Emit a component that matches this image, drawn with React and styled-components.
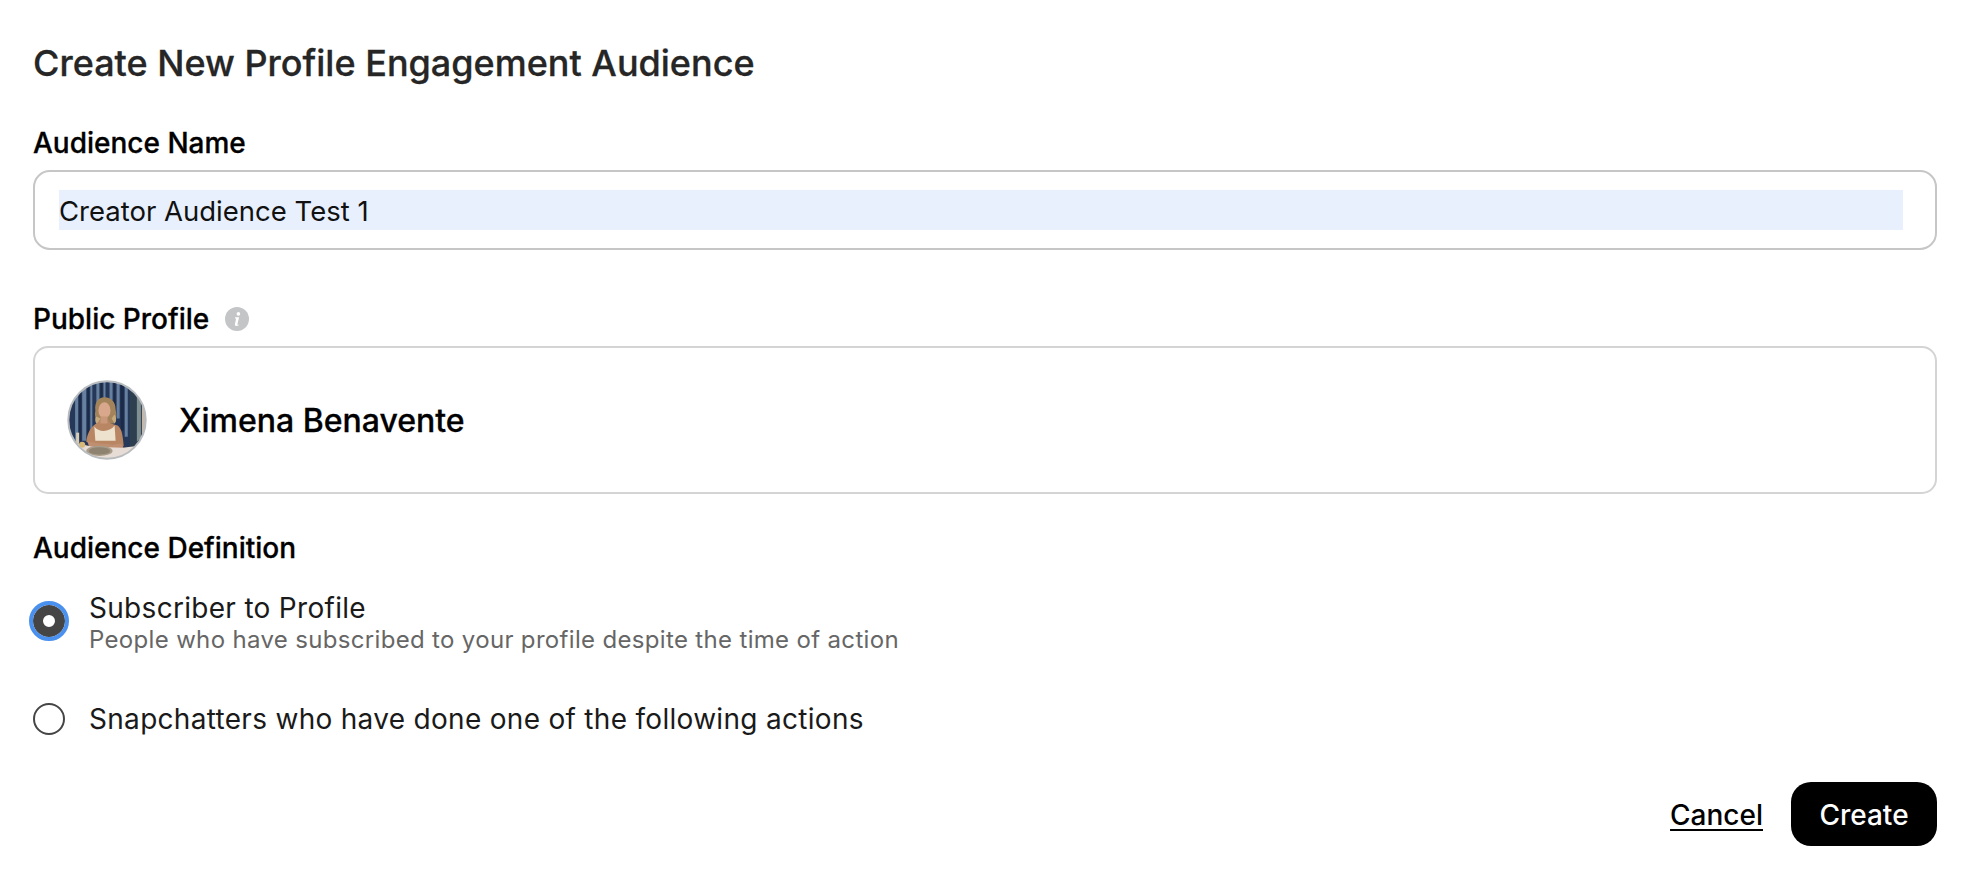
import React from 'react';
import styled, { createGlobalStyle } from 'styled-components';

const GlobalStyle = createGlobalStyle`
    html, body {
        margin: 0;
        padding: 0;
        background: #fff;
    }
    body {
        font-family: Inter, "Liberation Sans", sans-serif;
        color: #000;
    }
`;

const Page = styled.div`
    box-sizing: border-box;
    width: 1976px;
    height: 876px;
    padding: 43px 39px 30px 33px;
    display: flex;
    flex-direction: column;
    overflow: hidden;
`;

const Title = styled.h1`
    margin: 0 0 44px;
    font-size: 36px;
    line-height: 40px;
    font-weight: 500;
    -webkit-text-stroke: 0.3px #262626;
    color: #262626;
`;

const Label = styled.div`
    display: flex;
    align-items: center;
    gap: 16px;
    font-size: 28px;
    line-height: 32px;
    font-weight: 500;
    -webkit-text-stroke: 0.3px #000;
    margin-bottom: ${p => p.$gap || 11}px;
`;

const NameField = styled.div`
    box-sizing: border-box;
    height: 80px;
    padding: 18px 32px 18px 24px;
    border: 2px solid #c6c6c6;
    border-radius: 17px;
    margin-bottom: 53px;
`;

const NameValue = styled.div`
    height: 40px;
    line-height: 42px;
    font-size: 27.5px;
    background: #e8f0fe;
    color: #111;
`;

const ProfileCard = styled.div`
    box-sizing: border-box;
    height: 148px;
    padding: 0 32px;
    display: flex;
    align-items: center;
    gap: 32px;
    border: 2px solid #d4d4d4;
    border-radius: 15px;
    margin-bottom: 38px;
`;

const ProfileName = styled.div`
    font-size: 32px;
    font-weight: 500;
    -webkit-text-stroke: 0.3px #000;
    color: #000;
`;

const RadioRow = styled.div`
    display: flex;
    align-items: center;
    gap: 24px;
    min-height: ${p => p.$height}px;
    margin-bottom: ${p => p.$gap || 0}px;
`;

const RadioSlot = styled.div`
    width: 32px;
    height: 32px;
    flex: none;
    display: flex;
    align-items: center;
    justify-content: center;
    margin-bottom: ${p => p.$lift || 0}px;
`;

const Radio = styled.span`
    box-sizing: border-box;
    flex: none;
    display: block;
    width: 32px;
    height: 32px;
    border-radius: 50%;
    background: #fff;
    border: 2px solid #454545;
`;

const RadioChecked = styled.span`
    box-sizing: border-box;
    flex: none;
    display: block;
    width: 32px;
    height: 32px;
    border-radius: 50%;
    background: #fff;
    border: 10px solid #454545;
    outline: 4px solid #4a90ee;
`;

const RadioText = styled.div`
    display: flex;
    flex-direction: column;
`;

const RadioTitle = styled.div`
    font-size: 28px;
    line-height: 34px;
    letter-spacing: 0.3px;
    color: #1a1a1a;
`;

const RadioHint = styled.div`
    font-size: 24px;
    line-height: 30px;
    letter-spacing: 0.33px;
    color: #666;
`;

const Actions = styled.div`
    display: flex;
    justify-content: flex-end;
    align-items: center;
    gap: 28px;
    margin-top: auto;
`;

const CancelLink = styled.a`
    padding-top: 2px;
    font-size: 28px;
    font-weight: 500;
    color: #000;
    text-decoration: underline;
    text-underline-offset: 4px;
    text-decoration-thickness: 2px;
`;

const CreateButton = styled.button`
    width: 146px;
    height: 64px;
    padding: 2px 0 0;
    border: 0;
    border-radius: 20px;
    background: #000;
    color: #fff;
    font-family: inherit;
    font-size: 28px;
    font-weight: 500;
`;

const InfoIcon = () => (
    <svg width="24" height="24" viewBox="0 0 24 24">
        <circle cx="12" cy="12" r="12" fill="#c4c5c7" />
        <circle cx="13.4" cy="6.9" r="1.8" fill="#fff" />
        <path d="M10.2 10.3h3.9l-1.7 6.9c-.1.5.3.6 1.3.3l-.2 1c-2.2.9-4 .6-3.6-1.2l1.2-5.6-1.1-.3z" fill="#fff" />
    </svg>
);

const Avatar = () => (
    <svg width="80" height="80" viewBox="0 0 79 79">
        <defs>
            <clipPath id="avatar-clip"><circle cx="39.5" cy="39.5" r="38" /></clipPath>
            <filter id="avatar-soft"><feGaussianBlur stdDeviation="0.7" /></filter>
        </defs>
        <g clipPath="url(#avatar-clip)">
            <g filter="url(#avatar-soft)">
                {/* curtain */}
                <rect width="79" height="79" fill="#27385a" />
                <path d="M8 0h3v62H8zM15 0h4v60h-4zM23 0h2v56h-2zM29 0h3v30h-3zM36 0h2v18h-2zM42 0h3v20h-3zM49 0h3v38h-3zM57 0h3v56h-3z" fill="#66809f" />
                <path d="M12 0h2v60h-2zM20 0h2v58h-2zM33 0h2v24h-2zM46 0h2v30h-2zM53 0h3v50h-3z" fill="#1d2b47" />
                <rect x="62" y="0" width="17" height="79" fill="#2f4150" />
                <path d="M69 8l4 3v46l-4 4z" fill="#7f8f92" />
                <path d="M74 14l5 3v40h-5z" fill="#c4b8aa" />
                {/* hair */}
                <path d="M28 30c-1-8 3-13 9-13s11 4 11 12c1 5 1 9-1 14l-16 1c-3-4-4-9-3-14z" fill="#a3835a" />
                <path d="M29 36c-2 3-1 6 1 8l3-6zM47 34c2 3 2 7 0 9l-3-5z" fill="#c7aa7c" />
                {/* body */}
                <path d="M33 40h8l2 3 7 2c4 3 5 9 6 20l-2 2-7-3H26l-7-3c1-9 5-15 10-18z" fill="#b98664" />
                <ellipse cx="37" cy="30" rx="6" ry="8" fill="#d8a78c" />
                <rect x="33" y="36" width="7" height="7" fill="#c9977a" />
                <path d="M27 46c4 6 15 6 20-1l1 15H28z" fill="#ece2cd" />
                <path d="M20 60c8 3 22 4 34 3l2 5-34-1z" fill="#c08e70" />
                {/* table and plate */}
                <path d="M8 62l17 4 30 1 24-3v15H8z" fill="#e8ddd6" />
                <ellipse cx="32" cy="70" rx="13" ry="5" fill="#a99c88" />
                <ellipse cx="32" cy="70" rx="10.5" ry="3.6" fill="#8e8270" />
                <rect x="9" y="52" width="3" height="11" fill="#d9cdb8" />
                <circle cx="15" cy="64" r="3" fill="#d8b877" />
            </g>
        </g>
        <circle cx="39.5" cy="39.5" r="38.2" fill="none" stroke="#b9bcbf" strokeWidth="2" />
    </svg>
);

function App() {
    return <>
        <GlobalStyle />
        <Page>
            <Title>Create New Profile Engagement Audience</Title>

            <Label>Audience Name</Label>
            <NameField>
                <NameValue>Creator Audience Test 1</NameValue>
            </NameField>

            <Label>Public Profile <InfoIcon /></Label>
            <ProfileCard>
                <Avatar />
                <ProfileName>Ximena Benavente</ProfileName>
            </ProfileCard>

            <Label $gap={27}>Audience Definition</Label>
            <RadioRow $height={64} $gap={46}>
                <RadioSlot $lift={5}><RadioChecked /></RadioSlot>
                <RadioText>
                    <RadioTitle>Subscriber to Profile</RadioTitle>
                    <RadioHint>People who have subscribed to your profile despite the time of action</RadioHint>
                </RadioText>
            </RadioRow>
            <RadioRow $height={36}>
                <RadioSlot><Radio /></RadioSlot>
                <RadioTitle>Snapchatters who have done one of the following actions</RadioTitle>
            </RadioRow>

            <Actions>
                <CancelLink>Cancel</CancelLink>
                <CreateButton>Create</CreateButton>
            </Actions>
        </Page>
    </>;
}

export default App;
